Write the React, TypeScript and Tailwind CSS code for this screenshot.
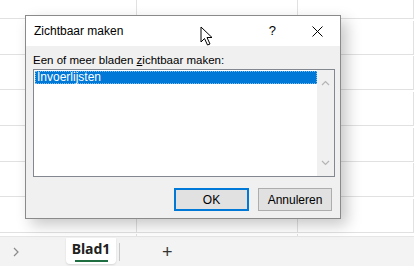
import React from 'react'

const rows = [18, 33, 33, 33, 33, 33, 33]

const Cursor = () => (
  <svg className="absolute left-[200px] top-[26px]" width="14" height="21" viewBox="0 0 14 21">
    <path d="M1 1 L1 16 L4.5 12.5 L7.5 19 L10 18 L7 11.5 L12 11.5 Z" fill="#fff" stroke="#000" strokeWidth="1" strokeLinejoin="miter" />
  </svg>
)

export default function App() {
  return (
    <div className="relative w-[414px] h-[266px] overflow-hidden bg-white font-['Liberation_Sans',Arial,sans-serif] text-[12px] text-[#000]">
      {/* sheet grid */}
      <div className="grid grid-cols-[137px_161px_1fr] h-[236px]">
        {rows.map((h, r) =>
          [0, 1, 2].map(c => (
            <div key={`${r}-${c}`} className="border-b border-r border-[#e1e1e1]" style={{ height: h + 1 }} />
          ))
        )}
        <div className="border-r border-[#e1e1e1]" />
        <div className="border-r border-[#e1e1e1]" />
        <div />
      </div>

      {/* sheet tabs */}
      <div className="flex items-center h-[30px] bg-[#f3f3f3] border-t border-[#e6e6e6]">
        <svg className="ml-[12px]" width="8" height="10" viewBox="0 0 8 10">
          <path d="M2 1 L6 5 L2 9" fill="none" stroke="#8a8a8a" strokeWidth="1.2" />
        </svg>
        <div className="ml-[46px] flex flex-col items-center self-start mt-[1px] h-[26px] w-[50px] bg-white rounded-b-[4px] shadow-[0_1px_2px_rgba(0,0,0,0.12)]">
          <span className="mt-[2px] font-['Noto_Sans',sans-serif] text-[14px] font-bold text-[#222] leading-[18px]">Blad1</span>
          <div className="mt-[2px] h-[2px] w-[33px] bg-[#1e6e42]" />
        </div>
        <div className="ml-[3px] h-[18px] w-px bg-[#c8c8c8]" />
        <span className="ml-[42px] text-[18px] font-light text-[#333] leading-none">+</span>
      </div>

      {/* dialog */}
      <div className="absolute left-[25px] top-[15px] w-[316px] h-[204px] flex flex-col border border-[#8a8a8a] bg-[#f0f0f0] shadow-[6px_6px_14px_rgba(0,0,0,0.22)]">
        <div className="flex items-center h-[30px] bg-white">
          <span className="ml-[8px] text-[12px]">Zichtbaar maken</span>
          <span className="ml-auto mr-[36px] text-[13px]">?</span>
          <svg className="mr-[17px]" width="11" height="11" viewBox="0 0 11 11">
            <path d="M0.5 0.5 L10.5 10.5 M10.5 0.5 L0.5 10.5" stroke="#000" strokeWidth="1" />
          </svg>
        </div>
        <div className="flex flex-col px-[7px] pt-[6px] pb-[7px]">
          <div className="leading-[16px] text-[11.5px]">
            Een of meer bladen <span className="underline">z</span>ichtbaar maken:
          </div>
          <div className="mt-[1px] flex w-[302px] h-[108px] border border-[#828790] bg-white">
            <div className="flex-1 pt-[1px] pl-[1px]">
              <div className="h-[13px] bg-[#0078d7] border border-dotted border-[#7fbbeb] text-white text-[12px] leading-[11px] pl-[1px]">
                Invoerlijsten
              </div>
            </div>
            <div className="w-[17px] flex flex-col items-center justify-between bg-[#f0f0f0] py-[10px]">
              <svg width="9" height="6" viewBox="0 0 9 6">
                <path d="M1 5 L4.5 1.5 L8 5" fill="none" stroke="#b5b5b5" strokeWidth="1.2" />
              </svg>
              <svg width="9" height="6" viewBox="0 0 9 6">
                <path d="M1 1 L4.5 4.5 L8 1" fill="none" stroke="#b5b5b5" strokeWidth="1.2" />
              </svg>
            </div>
          </div>
          <div className="mt-[11px] flex justify-end gap-[9px] pr-[1px]">
            <button className="w-[75px] h-[23px] border-2 border-[#0078d7] bg-[#e1e1e1] text-[12px] leading-none">OK</button>
            <button className="w-[74px] h-[23px] border border-[#adadad] bg-[#e1e1e1] text-[12px] leading-none">Annuleren</button>
          </div>
        </div>
      </div>

      <Cursor />
    </div>
  )
}
